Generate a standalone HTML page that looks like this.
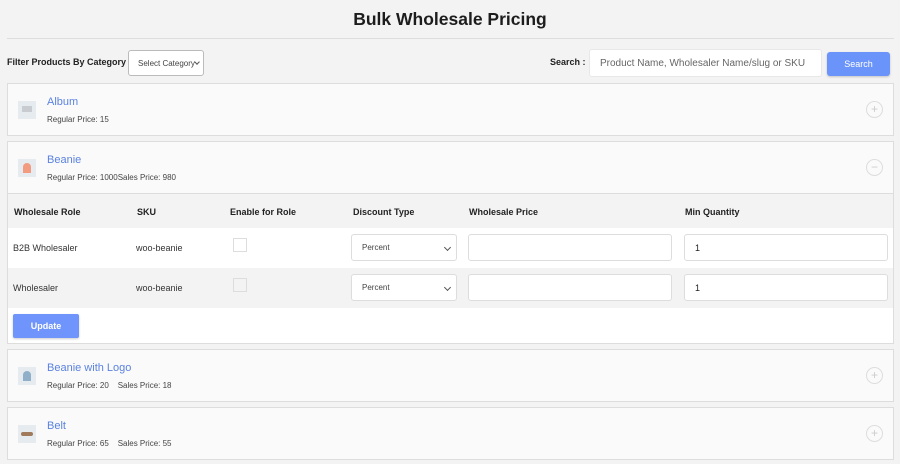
<!DOCTYPE html>
<html><head><style>
*{box-sizing:border-box;margin:0;padding:0}
body{width:900px;height:464px;background:#f3f3f3;font-family:"Liberation Sans",sans-serif;color:#222;position:relative;overflow:hidden}
.a{position:absolute}
h1{position:absolute;top:9px;left:0;width:900px;text-align:center;font-size:17.5px;font-weight:bold;color:#1d1d1d}
.hr{top:38px;left:7px;width:887px;height:1px;background:#ddd}
.card{position:absolute;left:7px;width:887px;background:#fafafa;border:1px solid #ddd}
.thumb{position:absolute;left:10px;width:18px;height:18px;background:#e6ebf0}
.name{position:absolute;left:39px;font-size:11px;color:#5b82e0}
.price{position:absolute;left:39px;font-size:8px;color:#444}
.circ{position:absolute;left:858px;width:17px;height:17px;border:1px solid #ddd;border-radius:50%;color:#ccc;font-size:12px;line-height:14px;text-align:center}
.th{position:absolute;font-size:9px;font-weight:bold;color:#222}
.td{position:absolute;font-size:9px;color:#333}
.sel{position:absolute;width:106px;height:27px;background:#fff;border:1px solid #ddd;border-radius:3px;font-size:8px;color:#444;padding:8px 0 0 10px}
.inp{position:absolute;height:27px;background:#fff;border:1px solid #ddd;border-radius:3px;font-size:9px;padding:8px 0 0 10px}
.chev{position:absolute;right:6px;top:10px;width:5px;height:5px;border-right:1px solid #555;border-bottom:1px solid #555;transform:rotate(45deg)}
</style></head><body>
<h1>Bulk Wholesale Pricing</h1>
<div class="a hr"></div>
<div class="a" style="left:7px;top:57px;font-size:9px;font-weight:bold">Filter Products By Category</div>
<div class="a" style="left:128px;top:50px;width:76px;height:26px;background:#fff;border:1px solid #bbb;border-radius:3px;font-size:8px;color:#444;padding:8px 0 0 9px">Select Category<div class="chev" style="right:4px;top:9px;width:4px;height:4px"></div></div>
<div class="a" style="left:550px;top:57px;font-size:9px;font-weight:bold">Search :</div>
<div class="a" style="left:589px;top:49px;width:233px;height:28px;background:#fff;border:1px solid #e8e8e8;border-radius:3px;font-size:10px;color:#666;padding:8px 0 0 10px">Product Name, Wholesaler Name/slug or SKU</div>
<div class="a" style="left:827px;top:52px;width:63px;height:24px;background:#6b94fb;border-radius:3px;color:#fff;font-size:9px;text-align:center;line-height:24px;box-shadow:0 1px 2px rgba(0,0,0,.2)">Search</div>

<div class="card" style="top:83px;height:53px">
<div class="thumb" style="top:17px"><div style="margin:5px 4px;width:10px;height:6px;background:#c8ccd0"></div></div>
<div class="name" style="top:12px">Album</div>
<div class="price" style="top:31px">Regular Price: 15</div>
<div class="circ" style="top:17px">+</div>
</div>

<div class="card" style="top:141px;height:203px;background:#fff">
<div style="position:absolute;left:0;top:0;width:885px;height:52px;background:#fafafa;border-bottom:1px solid #ddd"></div>
<div class="thumb" style="top:17px"><div style="margin:4px 5px;width:8px;height:10px;background:#f29b80;border-radius:4px 4px 0 0"></div></div>
<div class="name" style="top:12px">Beanie</div>
<div class="price" style="top:31px">Regular Price: 1000Sales Price: 980</div>
<div class="circ" style="top:17px">−</div>
<div style="position:absolute;left:0;top:52px;width:885px;height:34px;background:#f3f3f3"></div>
<div class="th" style="left:6px;top:65px">Wholesale Role</div>
<div class="th" style="left:129px;top:65px">SKU</div>
<div class="th" style="left:222px;top:65px">Enable for Role</div>
<div class="th" style="left:345px;top:65px">Discount Type</div>
<div class="th" style="left:461px;top:65px">Wholesale Price</div>
<div class="th" style="left:677px;top:65px">Min Quantity</div>
<div style="position:absolute;left:0;top:126px;width:885px;height:40px;background:#f3f3f3"></div>
<div class="td" style="left:5px;top:101px">B2B Wholesaler</div>
<div class="td" style="left:128px;top:101px">woo-beanie</div>
<div style="position:absolute;left:225px;top:96px;width:14px;height:14px;border:1px solid #ddd;background:#fff"></div>
<div class="sel" style="left:343px;top:92px">Percent<div class="chev"></div></div>
<div class="inp" style="left:460px;top:92px;width:204px"></div>
<div class="inp" style="left:676px;top:92px;width:204px">1</div>
<div class="td" style="left:5px;top:141px">Wholesaler</div>
<div class="td" style="left:128px;top:141px">woo-beanie</div>
<div style="position:absolute;left:225px;top:136px;width:14px;height:14px;border:1px solid #ddd;background:#f3f3f3"></div>
<div class="sel" style="left:343px;top:132px">Percent<div class="chev"></div></div>
<div class="inp" style="left:460px;top:132px;width:204px"></div>
<div class="inp" style="left:676px;top:132px;width:204px">1</div>
<div style="position:absolute;left:5px;top:172px;width:66px;height:24px;background:#6f95fc;border-radius:2px;color:#fff;font-size:9px;font-weight:bold;text-align:center;line-height:24px;box-shadow:0 1px 2px rgba(0,0,0,.2)">Update</div>
</div>

<div class="card" style="top:349px;height:53px">
<div class="thumb" style="top:17px"><div style="margin:4px 5px;width:8px;height:10px;background:#8fb0c8;border-radius:4px 4px 0 0"></div></div>
<div class="name" style="top:12px">Beanie with Logo</div>
<div class="price" style="top:31px">Regular Price: 20 &nbsp;&nbsp;&nbsp;Sales Price: 18</div>
<div class="circ" style="top:17px">+</div>
</div>

<div class="card" style="top:407px;height:53px">
<div class="thumb" style="top:17px"><div style="margin:7px 3px;width:12px;height:4px;background:#a07a5a;border-radius:2px"></div></div>
<div class="name" style="top:12px">Belt</div>
<div class="price" style="top:31px">Regular Price: 65 &nbsp;&nbsp;&nbsp;Sales Price: 55</div>
<div class="circ" style="top:17px">+</div>
</div>
</body></html>
